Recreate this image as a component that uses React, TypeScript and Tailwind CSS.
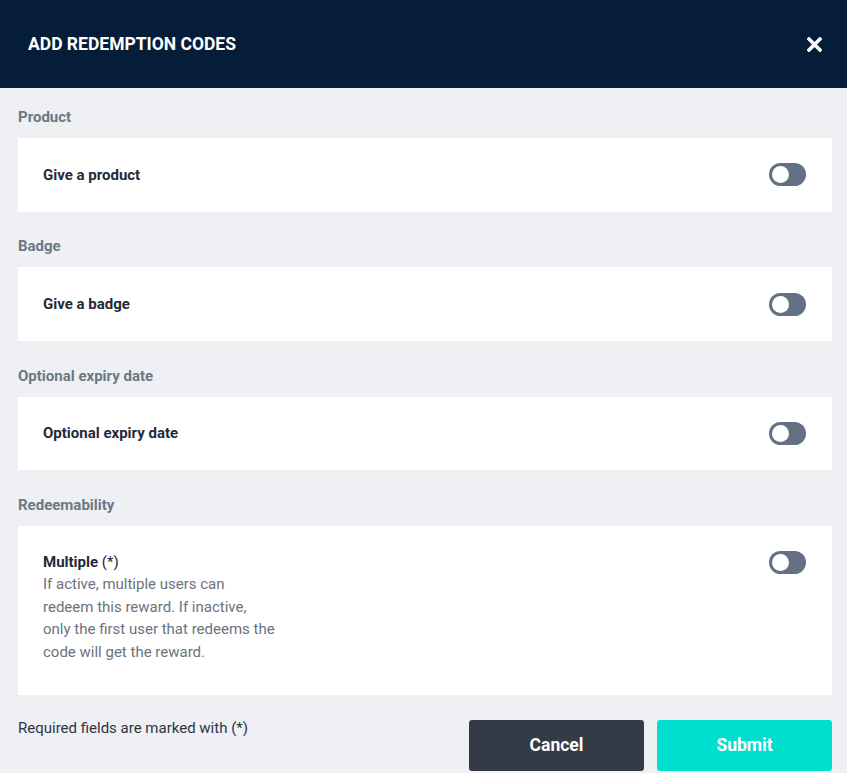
import React, { useState } from 'react';

interface Section {
  label: string;
  title: string;
  required?: boolean;
  description?: string;
}

const sections: Section[] = [
  { label: 'Product', title: 'Give a product' },
  { label: 'Badge', title: 'Give a badge' },
  { label: 'Optional expiry date', title: 'Optional expiry date' },
  {
    label: 'Redeemability',
    title: 'Multiple',
    required: true,
    description:
      'If active, multiple users can redeem this reward. If inactive, only the first user that redeems the code will get the reward.',
  },
];

const Toggle: React.FC<{ on: boolean; onChange: () => void }> = ({ on, onChange }) => (
  <button
    type="button"
    onClick={onChange}
    className={`relative w-[37px] h-[23px] rounded-full shrink-0 ${on ? 'bg-[#00dfcd]' : 'bg-[#647083]'}`}
  >
    <span
      className={`absolute top-[3px] w-[17px] h-[17px] rounded-full bg-white ${on ? 'left-[17px]' : 'left-[3px]'}`}
    />
  </button>
);

const App: React.FC = () => {
  const [toggles, setToggles] = useState<boolean[]>([false, false, false, false]);

  const flip = (i: number) =>
    setToggles(prev => prev.map((v, idx) => (idx === i ? !v : v)));

  return (
    <div className="min-h-screen bg-[#eef0f3] font-['Roboto',sans-serif]">
      <header className="h-[88px] bg-[#061d39] flex items-center justify-between pl-[28px] pr-[25px]">
        <h1 className="text-white text-[17.5px] font-bold uppercase">Add redemption codes</h1>
        <button type="button" className="text-white">
          <svg width="15" height="15" viewBox="0 0 15 15">
            <path d="M2 2 L13 13 M13 2 L2 13" stroke="white" strokeWidth="3.6" strokeLinecap="square" />
          </svg>
        </button>
      </header>

      <main className="pl-[18px] pr-[15px] pt-[19px]">
        {sections.map((s, i) => (
          <section key={s.label} className={i > 0 ? 'mt-[24.8px]' : ''}>
            <h2 className="text-[15px] leading-[20px] font-bold text-[#6b7885] mb-[11px]">{s.label}</h2>
            {s.description ? (
              <div className="bg-white flex items-start justify-between pl-[25px] pr-[26px] pt-[25px] pb-[31px]">
                <div className="max-w-[232px]">
                  <p className="text-[15px] leading-[22px] font-bold text-[#1f2a3b]">
                    {s.title}
                    {s.required && <span className="font-normal"> (*)</span>}
                  </p>
                  <p className="text-[15px] leading-[22.7px] text-[#6b7280]">{s.description}</p>
                </div>
                <Toggle on={toggles[i]} onChange={() => flip(i)} />
              </div>
            ) : (
              <div className="bg-white h-[73.5px] flex items-center justify-between pl-[25px] pr-[26px]">
                <span className="text-[15px] font-bold text-[#1f2a3b]">{s.title}</span>
                <Toggle on={toggles[i]} onChange={() => flip(i)} />
              </div>
            )}
          </section>
        ))}

        <div className="flex justify-between items-start mt-[25px]">
          <p className="text-[15px] leading-[16px] text-[#2d3544]">Required fields are marked with (*)</p>
          <div className="flex gap-[13px]">
            <button type="button" className="w-[175px] h-[51px] rounded-[3px] bg-[#343b47] text-white text-[17.5px] font-bold">
              Cancel
            </button>
            <button type="button" className="w-[175px] h-[51px] rounded-[3px] bg-[#00dfcd] text-white text-[17.5px] font-bold">
              Submit
            </button>
          </div>
        </div>
      </main>
    </div>
  );
};

export default App;
